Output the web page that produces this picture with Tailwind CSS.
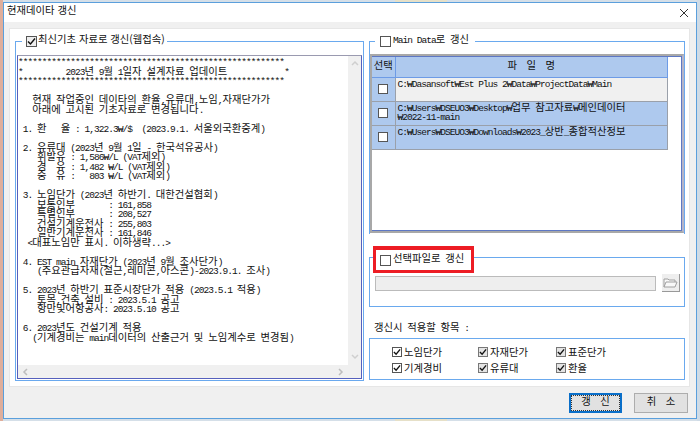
<!DOCTYPE html>
<html lang="ko">
<head>
  <meta charset="UTF-8" />
  <title>현재데이타 갱신</title>
  <script src="https://cdn.jsdelivr.net/npm/@tailwindcss/browser@4"></script>
</head>
<body class="w-[700px] h-[421px] overflow-hidden bg-[linear-gradient(90deg,#d5dfe8_395px,#e6e0c8_395px,#e6e0c8_447px,#d5dfe8_447px)] text-[#111] font-['Liberation_Mono','Noto_Sans_CJK_KR',monospace] text-[9.5px] tracking-[-0.95px] [&_i]:not-italic [&_i]:text-[10.33px] [&_i]:leading-[0] [&_i]:tracking-normal [&_i]:font-['Noto_Sans_CJK_KR',sans-serif]">
  <div class="flex h-[421px] pt-[2px] pb-[2px]">
    <!-- Spreadsheet peeking out behind the dialog -->
    <div class="w-[3px] -mt-[2px] -mb-[2px] bg-[#dfae9b]"></div>

    <!-- Dialog -->
    <div class="w-[694px] h-[417px] flex flex-col border border-[#5a9fdc] bg-[#f0f0f0]">
      <div class="h-[19px] flex items-center justify-between bg-white pl-[3px] pr-[7px]">
        <span><i>현재데이타 갱신</i></span>
        <svg width="10" height="10" viewBox="0 0 10 10" class="stroke-[#333]"><path d="M1 1l8 8M9 1l-8 8" fill="none" stroke-width="1" /></svg>
      </div>

      <div class="h-[6px]"></div>

      <div class="ml-[5px] w-[681px] h-[359px] flex gap-[5px] bg-white border border-[#e6e6e6] pl-[5px] pt-[5px]">
        <!-- Left group -->
        <fieldset class="w-[349px] h-[347px] border border-[#6aa9ee] pb-[1px] pl-[1px] pr-[1px]">
          <legend class="ml-[5px] pl-[4px] pr-[2px] h-[14px] flex items-center gap-[1px]">
            <span class="w-[11px] h-[11px] flex items-center justify-center border-[1.5px] border-[#555] bg-[#eee]">
              <svg width="9" height="9" viewBox="0 0 9 9"><path d="M1 4.5l2.5 2.5 4.5-5.5" fill="none" stroke="#111" stroke-width="1.4" /></svg>
            </span>
            <span><i>최신기초 자료로 갱신(웹접속)</i></span>
          </legend>
          <div class="mt-[7px] h-[324px] flex border border-[#5560bd] border-t-[#9a9ab0]">
            <div class="flex-1 flex flex-col min-w-0">
              <pre class="flex-1 overflow-hidden pt-[2px] leading-[9.5px] font-['Liberation_Mono',monospace]">********************************************************
*         <span>2023<i>년</i> 9<i>월</i> 1<i>일자</i> <i>설계자료</i> <i>업데이트</i></span>            *
********************************************************

   <i>현재</i> <i>작업중인</i> <i>데이타의</i> <i>환율</i>,<i>유류대</i>,<i>노임</i>,<i>자재단가가</i>
   <i>아래에</i> <i>고시된</i> <i>기초자료로</i> <i>변경됩니다</i>.

 1. <i>환</i>   <i>율</i> : 1,322.3₩/$  (2023.9.1. <i>서울외국환중계</i>)

 2. <i>유류대</i> (2023<i>년</i> 9<i>월</i> 1<i>일</i> - <i>한국석유공사</i>)
    <i>휘발유</i> : 1,586₩/L (VAT<i>제외</i>)
    <i>경</i>  <i>유</i> : 1,482 ₩/L (VAT<i>제외</i>)
    <i>중</i>  <i>유</i> :   803 ₩/L (VAT<i>제외</i>)

 3. <i>노임단가</i> (2023<i>년</i> <i>하반기</i>. <i>대한건설협회</i>)
    <i>보통인부</i>       : 161,858
    <i>특별인부</i>       : 208,527
    <i>건설기계운전사</i> : 255,803
    <i>일반기계운전사</i> : 161,846
  &lt;<i>대표노임만</i> <i>표시</i>. <i>이하생략</i>...&gt;

 4. EST main <i>자재단가</i> (2023<i>년</i> 9<i>월</i> <i>조사단가</i>)
    (<i>주요관급자재</i>(<i>철근</i>,<i>레미콘</i>,<i>아스콘</i>)-2023.9.1. <i>조사</i>)

 5. 2023<i>년</i> <i>하반기</i> <i>표준시장단가</i> <i>적용</i> (2023.5.1 <i>적용</i>)
    <i>토목</i>,<i>건축</i>,<i>설비</i> : 2023.5.1 <i>공고</i>
    <i>항만및어항공사</i>: 2023.5.10 <i>공고</i>

 6. 2023<i>년도</i> <i>건설기계</i> <i>적용</i>
   (<i>기계경비는</i> main<i>데이터의</i> <i>산출근거</i> <i>및</i> <i>노임계수로</i> <i>변경됨</i>)</pre>
              <div class="h-[13px] shrink-0 flex items-center justify-between bg-[#f0f0f0] px-[4px]">
                <svg width="6" height="8" viewBox="0 0 6 8"><path d="M5 1L2 4l3 3" fill="none" stroke="#bdbdbd" stroke-width="1.5" /></svg>
                <svg width="6" height="8" viewBox="0 0 6 8"><path d="M1 1l3 3-3 3" fill="none" stroke="#bdbdbd" stroke-width="1.5" /></svg>
              </div>
            </div>
            <div class="w-[13px] shrink-0 flex flex-col items-center justify-between bg-[#f0f0f0] pt-[4px] pb-[18px]">
              <svg width="8" height="6" viewBox="0 0 8 6"><path d="M1 5l3-3 3 3" fill="none" stroke="#cfcfcf" stroke-width="1.5" /></svg>
              <svg width="8" height="6" viewBox="0 0 8 6"><path d="M1 1l3 3 3-3" fill="none" stroke="#cfcfcf" stroke-width="1.5" /></svg>
            </div>
          </div>
        </fieldset>

        <!-- Right column -->
        <div class="w-[316px] flex flex-col">
          <fieldset class="h-[200px] border border-[#6aa9ee] border-b-0">
            <legend class="ml-[5px] pl-[5px] pr-[6px] h-[14px] flex items-center gap-[2px]">
              <span class="w-[11px] h-[11px] border-[1.5px] border-[#555] bg-white"></span>
              <span>Main Data<i>로</i> <i>갱신</i></span>
            </legend>
            <div class="mt-[6px] h-[179px] border-2 border-[#a8a8a8] border-r-[#b4b4c8] bg-white">
              <div class="h-full border-t border-r border-b border-[#5d77c4]">
                <table class="w-[296px] table-fixed border-collapse">
                  <thead>
                    <tr class="h-[20px] bg-[#aec9ee]">
                      <th class="w-[23px] border-r border-b border-[#6d9be6] font-normal"><i>선택</i></th>
                      <th class="border-r border-b border-[#6d9be6] font-normal whitespace-pre"><i>파</i>  <i>일</i>  <i>명</i></th>
                    </tr>
                  </thead>
                  <tbody class="leading-[9.5px]">
                    <tr class="h-[24px] bg-[#f0f0f0]">
                      <td class="border-r border-b border-[#9aa0aa] bg-[#aec9ee] align-middle"><span class="block mx-auto w-[10px] h-[10px] border-[1.5px] border-[#555] bg-white"></span></td>
                      <td class="border-r border-b border-[#9aa0aa] align-top pl-[2px] pt-[2px]">C:₩Dasansoft₩Est Plus 2₩Data₩ProjectData₩Main</td>
                    </tr>
                    <tr class="h-[24px] bg-[#aec9ee]">
                      <td class="border-r border-b border-[#9aa0aa] align-middle"><span class="block mx-auto w-[10px] h-[10px] border-[1.5px] border-[#555] bg-white"></span></td>
                      <td class="border-r border-b border-[#9aa0aa] align-top pl-[2px] pt-[2px]">C:₩Users₩DSEUO3₩Desktop₩<i>업무</i> <i>참고자료</i>₩<i>메인데이터</i><br />₩2022-11-main</td>
                    </tr>
                    <tr class="h-[24px] bg-[#aec9ee]">
                      <td class="border-r border-b border-[#9aa0aa] align-middle"><span class="block mx-auto w-[10px] h-[10px] border-[1.5px] border-[#555] bg-white"></span></td>
                      <td class="border-r border-b border-[#9aa0aa] align-top pl-[2px] pt-[2px]">C:₩Users₩DSEUO3₩Downloads₩2023_<i>상반</i>_<i>종합적산정보</i></td>
                    </tr>
                  </tbody>
                </table>
              </div>
            </div>
          </fieldset>

          <fieldset class="mt-[12px] h-[61px] border border-[#6aa9ee] pl-[5px] pr-[4px]">
            <legend class="-ml-[2px] w-[101px] h-[22px]">
              <span class="h-[27px] flex items-center gap-[2px] border-[3px] border-t-[4px] border-[#ed1c24] bg-white pl-[4px]">
                <span class="w-[11px] h-[11px] border-[1.5px] border-[#555] bg-white"></span>
                <span><i>선택파일로</i> <i>갱신</i></span>
              </span>
            </legend>
            <div class="pt-[6px] flex items-center justify-between">
              <div class="w-[281px] h-[15px] bg-[#eee] border border-[#bbb]"></div>
              <div class="w-[18px] h-[18px] flex items-center justify-center bg-[#eee] border-r border-b border-[#999]">
                <svg width="15" height="13" viewBox="0 0 15 13"><path d="M1 11V3h4l1 1h6v2M1 11l2-5h11l-2 5z" fill="#f8f8f8" stroke="#a0a0a0" stroke-width="1" /></svg>
              </div>
            </div>
          </fieldset>

          <div class="mt-[15px] pl-[5px] h-[14px] flex items-center"><span><i>갱신시</i> <i>적용할</i> <i>항목</i> :</span></div>

          <div class="mt-[2px] h-[42px] border border-[#6aa9ee] grid grid-cols-[86px_78px_1fr] grid-rows-[16px_16px] pl-[22px] pt-[5px]">
            <label class="flex items-center gap-[2px]"><span class="w-[10px] h-[10px] flex items-center justify-center border border-[#555] bg-white"><svg width="8" height="8" viewBox="0 0 9 9"><path d="M1 4.5l2.5 2.5 4.5-5.5" fill="none" stroke="#111" stroke-width="1.5" /></svg></span><i>노임단가</i></label>
            <label class="flex items-center gap-[2px]"><span class="w-[10px] h-[10px] flex items-center justify-center border border-[#777] bg-[#e4e4e4]"><svg width="8" height="8" viewBox="0 0 9 9"><path d="M1 4.5l2.5 2.5 4.5-5.5" fill="none" stroke="#111" stroke-width="1.5" /></svg></span><i>자재단가</i></label>
            <label class="flex items-center gap-[2px]"><span class="w-[10px] h-[10px] flex items-center justify-center border border-[#777] bg-[#e4e4e4]"><svg width="8" height="8" viewBox="0 0 9 9"><path d="M1 4.5l2.5 2.5 4.5-5.5" fill="none" stroke="#111" stroke-width="1.5" /></svg></span><i>표준단가</i></label>
            <label class="flex items-center gap-[2px]"><span class="w-[10px] h-[10px] flex items-center justify-center border border-[#555] bg-white"><svg width="8" height="8" viewBox="0 0 9 9"><path d="M1 4.5l2.5 2.5 4.5-5.5" fill="none" stroke="#111" stroke-width="1.5" /></svg></span><i>기계경비</i></label>
            <label class="flex items-center gap-[2px]"><span class="w-[10px] h-[10px] flex items-center justify-center border border-[#777] bg-[#e4e4e4]"><svg width="8" height="8" viewBox="0 0 9 9"><path d="M1 4.5l2.5 2.5 4.5-5.5" fill="none" stroke="#111" stroke-width="1.5" /></svg></span><i>유류대</i></label>
            <label class="flex items-center gap-[2px]"><span class="w-[10px] h-[10px] flex items-center justify-center border border-[#777] bg-[#e4e4e4]"><svg width="8" height="8" viewBox="0 0 9 9"><path d="M1 4.5l2.5 2.5 4.5-5.5" fill="none" stroke="#111" stroke-width="1.5" /></svg></span><i>환율</i></label>
          </div>
        </div>
      </div>

      <!-- Footer buttons -->
      <div class="flex justify-end gap-[12px] pt-[6px] pr-[8px]">
        <button class="w-[53px] h-[20px] border-2 border-[#0a6fc9] bg-[#e1e1e1] p-0">
          <span class="flex items-center justify-center h-full border border-dotted border-[#333]"><span class="whitespace-pre"><i>갱</i>  <i>신</i></span></span>
        </button>
        <button class="w-[54px] h-[20px] border border-[#adadad] bg-[#e1e1e1] whitespace-pre"><i>취</i>  <i>소</i></button>
      </div>
    </div>

    <div class="w-[3px] -mt-[2px] -mb-[2px] bg-[#cfdbe6]"></div>
  </div>
</body>
</html>
